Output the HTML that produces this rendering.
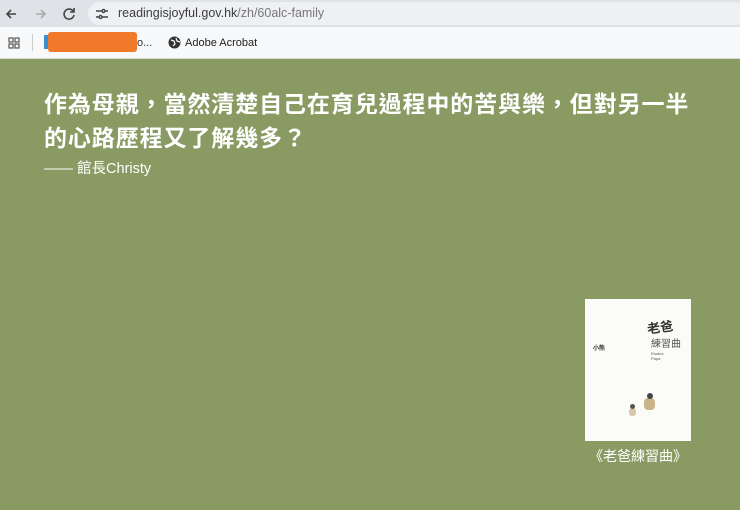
<!DOCTYPE html>
<html><head><meta charset="utf-8"><style>
*{margin:0;padding:0;box-sizing:border-box}
body{width:740px;height:510px;overflow:hidden;background:#899a62;font-family:"Liberation Sans","Noto Sans CJK TC",sans-serif;position:relative}
.top{position:absolute;left:0;top:0;width:740px;height:27px;background:#dfe2e6}
.url{position:absolute;left:88px;top:2px;width:660px;height:23px;background:#eef0f3;border-radius:12px}
.urltxt{position:absolute;left:118px;top:6px;font-size:12.5px;color:#3c3c3c}
.bm{position:absolute;left:0;top:27px;width:740px;height:32px;background:#f8f9fb;border-bottom:1px solid #d6d8dc}
.h1{position:absolute;left:44px;top:87px;color:#fff;font-weight:bold;font-size:23px;letter-spacing:0.9px;line-height:34px;font-family:"Liberation Sans","Noto Sans CJK TC",sans-serif;white-space:nowrap}
.sub{position:absolute;left:44px;top:157px;color:#fff;font-size:14.5px}
.cover{position:absolute;left:585px;top:299px;width:106px;height:142px;background:#fbfbf8}
.cap{position:absolute;left:585px;top:446px;width:106px;text-align:center;color:#fff;font-size:14px}
</style></head><body>
<div class="top">
<svg style="position:absolute;left:4px;top:6px" width="80" height="16" viewBox="0 0 80 16" fill="none" stroke-width="1.6">
<path d="M12 8H3M7 4L3 8l4 4" stroke="#444"/>
<path d="M32 8h9M37 4l4 4-4 4" stroke="#aaa"/>
<path d="M69 5a5 5 0 1 0 1 4M70 2v4h-4" stroke="#444"/>
</svg>
<div class="url"></div>
<svg style="position:absolute;left:95px;top:7px" width="14" height="14" viewBox="0 0 14 14" fill="none" stroke="#444" stroke-width="1.4"><path d="M1 4h6M10 4h3M1 10h3M7 10h6"/><circle cx="8.5" cy="4" r="1.5"/><circle cx="5.5" cy="10" r="1.5"/></svg>
<div class="urltxt">readingisjoyful.gov.hk<span style="color:#777">/zh/60alc-family</span></div>
</div>
<div class="bm">
<svg style="position:absolute;left:8px;top:10px" width="12" height="12" viewBox="0 0 12 12" fill="none" stroke="#555" stroke-width="1.2"><rect x="1" y="1" width="4" height="4"/><rect x="7" y="1" width="4" height="4"/><rect x="1" y="7" width="4" height="4"/><rect x="7" y="7" width="4" height="4"/></svg>
<div style="position:absolute;left:32px;top:7px;width:1px;height:17px;background:#ccc"></div>
<div style="position:absolute;left:44px;top:8px;width:8px;height:14px;background:#3a8fd0"></div>
<div style="position:absolute;left:48px;top:5px;width:89px;height:20px;background:#f07a2a;border-radius:3px"></div>
<div style="position:absolute;left:137px;top:10px;font-size:11px;color:#333">o...</div>
<svg style="position:absolute;left:168px;top:9px" width="13" height="13" viewBox="0 0 13 13"><circle cx="6.5" cy="6.5" r="6" fill="#333"/><path d="M3 4l3 1 1 3-2 2M8 2l1 3 3 1" stroke="#fff" stroke-width="1.2" fill="none"/></svg>
<div style="position:absolute;left:185px;top:10px;font-size:11px;color:#222">Adobe Acrobat</div>
</div>
<div class="h1">作為母親，當然清楚自己在育兒過程中的苦與樂，但對另一半<br>的心路歷程又了解幾多？</div>
<div class="sub">—— 館長Christy</div>
<div class="cover">
<div style="position:absolute;left:62px;top:18px;font-size:13px;color:#333;font-weight:bold;transform:rotate(-8deg)">老爸</div>
<div style="position:absolute;left:66px;top:36px;font-size:10px;color:#555">練習曲</div>
<div style="position:absolute;left:8px;top:44px;font-size:6px;color:#333;font-weight:bold">小熊</div>
<div style="position:absolute;left:66px;top:52px;font-size:4px;color:#555">Etudes<br>Papa</div>
<div style="position:absolute;left:59px;top:99px;width:11px;height:12px;background:#c9b48a;border-radius:4px"></div>
<div style="position:absolute;left:62px;top:94px;width:6px;height:6px;background:#444;border-radius:50%"></div>
<div style="position:absolute;left:44px;top:109px;width:7px;height:8px;background:#d9c8a8;border-radius:3px"></div>
<div style="position:absolute;left:45px;top:105px;width:5px;height:5px;background:#555;border-radius:50%"></div>
</div>
<div class="cap">《老爸練習曲》</div>
</body></html>
